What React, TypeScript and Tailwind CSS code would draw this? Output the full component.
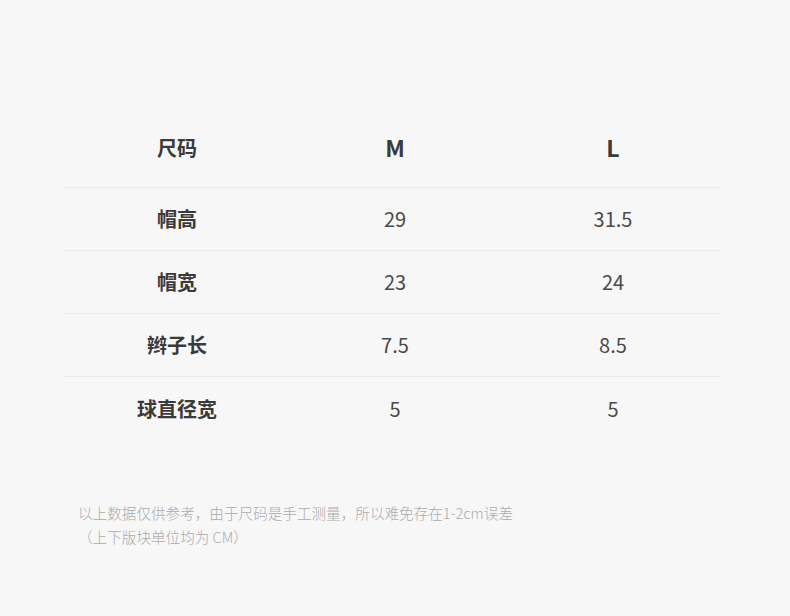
const ROWS: [string, string, string][] = [
  ['帽高', '29', '31.5'],
  ['帽宽', '23', '24'],
  ['辫子长', '7.5', '8.5'],
  ['球直径宽', '5', '5'],
]

const FONT = "font-['Microsoft_YaHei','Noto_Sans_CJK_SC',sans-serif]"

export default function App() {
  return (
    <div className={`w-[790px] h-[616px] bg-[#f7f7f7] ${FONT} overflow-hidden`}>
      <div className="pt-[110px] pl-[64px] w-[720px]">
        <div className="grid grid-cols-[226px_210px_226px] h-[78px] pb-[2px] items-center border-b border-[#ebebeb]">
          <div className="text-center text-[20px] font-bold text-[#3a3a3a]">尺码</div>
          <div className="text-center text-[23px] font-bold text-[#3a3a3a]">M</div>
          <div className="text-center text-[23px] font-bold text-[#3a3a3a]">L</div>
        </div>
        {ROWS.map(([label, m, l], i) => (
          <div
            key={label}
            className={`grid grid-cols-[226px_210px_226px] h-[63px] items-center ${i < ROWS.length - 1 ? 'border-b border-[#ebebeb]' : ''}`}
          >
            <div className="text-center text-[20px] font-bold text-[#3a3a3a]">{label}</div>
            <div className="text-center text-[20px] text-[#4a4a4a]">{m}</div>
            <div className="text-center text-[20px] text-[#4a4a4a]">{l}</div>
          </div>
        ))}
      </div>
      <div className="mt-[61px] pl-[78px] text-[14.6px] leading-[24px] font-light text-[#ababab]">
        <p>以上数据仅供参考，由于尺码是手工测量，所以难免存在1-2cm误差</p>
        <p>（上下版块单位均为 CM）</p>
      </div>
    </div>
  )
}
